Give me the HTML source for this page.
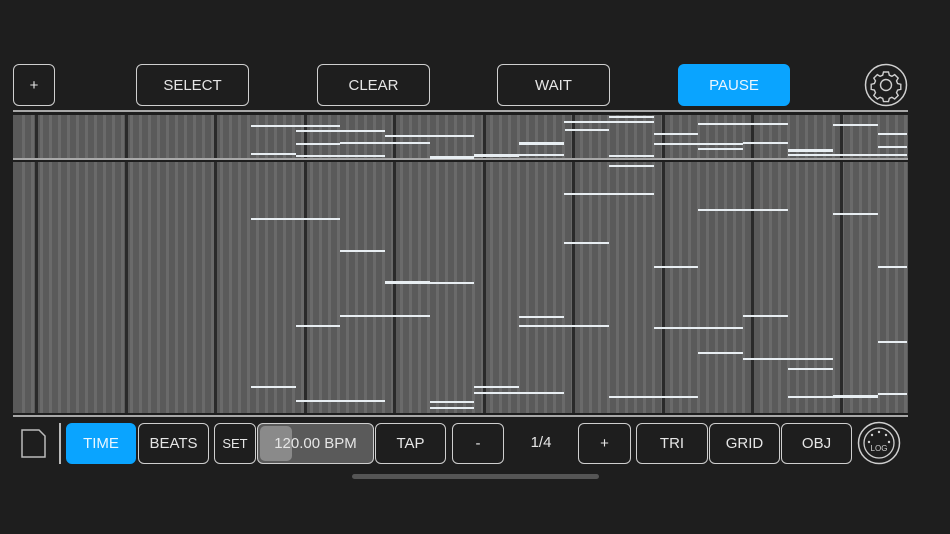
<!DOCTYPE html>
<html><head><style>
body{margin:0;background:#1e1e1e;width:950px;height:534px;overflow:hidden;position:relative;font-family:"Liberation Sans",sans-serif;}
.b{position:absolute;box-sizing:border-box;border:1.5px solid #cfcfcf;border-radius:6px;color:#e6e6e6;display:flex;align-items:center;justify-content:center;font-size:15px;letter-spacing:0}
.blue{background:#0aa4ff;border-color:#0aa4ff;color:#eaf6ff}
.hl{position:absolute;left:13px;width:895px;height:2px;background:#a8a8a8}
.g{position:absolute;left:13px;width:895px;background-color:#5a5a5a;background-image:repeating-linear-gradient(90deg,#5a5a5a 0 5px,#6a6a6a 5px 8px,#5a5a5a 8px 9px);background-position:4px 0}
.d{position:absolute;width:3px;background:#2a2a2a}
.n{position:absolute;height:2px;background:#e8eef2}
</style></head><body>
<div class="b" style="left:13px;top:64px;width:42px;height:42px">+</div>
<div class="b" style="left:136px;top:64px;width:113px;height:42px">SELECT</div>
<div class="b" style="left:317px;top:64px;width:113px;height:42px">CLEAR</div>
<div class="b" style="left:497px;top:64px;width:113px;height:42px">WAIT</div>
<div class="b blue" style="left:678px;top:64px;width:112px;height:42px">PAUSE</div>
<svg style="position:absolute;left:864px;top:63px" width="44" height="44" viewBox="0 0 44 44"><circle cx="22" cy="22" r="20.5" fill="none" stroke="#cfcfcf" stroke-width="1.5"/>
<g fill="none" stroke="#cfcfcf" stroke-width="1.4"><path d="M19.5 9h5l.8 3.2 2.6 1.1 2.8-1.7 3.5 3.5-1.7 2.8 1.1 2.6 3.2.8v5l-3.2.8-1.1 2.6 1.7 2.8-3.5 3.5-2.8-1.7-2.6 1.1-.8 3.2h-5l-.8-3.2-2.6-1.1-2.8 1.7-3.5-3.5 1.7-2.8-1.1-2.6-3.2-.8v-5l3.2-.8 1.1-2.6-1.7-2.8 3.5-3.5 2.8 1.7 2.6-1.1z"/><circle cx="22" cy="22" r="5.5"/></g></svg>
<div class="hl" style="top:110px"></div>
<div class="g" style="top:115px;height:43px"></div>
<div class="hl" style="top:158px"></div>
<div class="g" style="top:162px;height:251px"></div>
<div class="hl" style="top:415px"></div>
<div id="grid"></div>
<svg style="position:absolute;left:20px;top:429px" width="28" height="30"><path d="M2 1h17l6 6v21H2z" fill="none" stroke="#bbb" stroke-width="1.5"/></svg>
<div style="position:absolute;left:59px;top:423px;width:2px;height:41px;background:#bbb"></div>
<div class="b blue" style="left:66px;top:423px;width:70px;height:41px">TIME</div>
<div class="b" style="left:138px;top:423px;width:71px;height:41px">BEATS</div>
<div class="b" style="left:214px;top:423px;width:42px;height:41px;font-size:13px">SET</div>
<div class="b" style="left:257px;top:423px;width:117px;height:41px;background:#5a5a5a"><div style="position:absolute;left:2px;top:2px;width:32px;height:35px;background:#8a8a8a;border-radius:5px"></div><span style="position:relative">120.00 BPM</span></div>
<div class="b" style="left:375px;top:423px;width:71px;height:41px">TAP</div>
<div class="b" style="left:452px;top:423px;width:52px;height:41px">-</div>
<div style="position:absolute;left:520px;top:434px;width:42px;text-align:center;color:#e6e6e6;font-size:15px">1/4</div>
<div class="b" style="left:578px;top:423px;width:53px;height:41px">+</div>
<div class="b" style="left:636px;top:423px;width:72px;height:41px">TRI</div>
<div class="b" style="left:709px;top:423px;width:71px;height:41px">GRID</div>
<div class="b" style="left:781px;top:423px;width:71px;height:41px">OBJ</div>
<svg style="position:absolute;left:857px;top:421px" width="44" height="44"><circle cx="22" cy="22" r="20.5" fill="none" stroke="#cfcfcf" stroke-width="1.5"/><circle cx="22" cy="22" r="15" fill="none" stroke="#cfcfcf" stroke-width="1.3"/><g fill="#cfcfcf"><circle cx="22" cy="11" r="1.2"/><circle cx="15" cy="14" r="1.2"/><circle cx="29" cy="14" r="1.2"/><circle cx="12" cy="21" r="1.2"/><circle cx="32" cy="21" r="1.2"/></g><text x="22" y="30" font-size="8" fill="#cfcfcf" text-anchor="middle" font-family="Liberation Sans">LOG</text></svg>
<div style="position:absolute;left:352px;top:474px;width:247px;height:5px;border-radius:3px;background:#555"></div>
<script>
var g=document.getElementById('grid'),h='';
[36,126,215,305,394,484,573,663,752,841].forEach(function(x){h+='<div class="d" style="left:'+(x-1)+'px;top:115px;height:43px"></div><div class="d" style="left:'+(x-1)+'px;top:162px;height:251px"></div>';});
var N=[[251,340,125],[296,385,130],[385,474,135],[340,430,142],[296,340,143],[251,296,153],[296,385,155],[430,474,156,3],[474,519,154,3],[519,564,142,3],[519,564,154],[564,654,121],[609,654,116],[565,609,129],[609,654,155],[654,698,133],[698,788,123],[654,743,143],[698,743,148],[743,788,142],[788,833,149,3],[788,878,154],[833,878,124],[878,907,133],[878,907,146],[878,907,154],
[251,340,218],[340,385,250],[385,430,281,3],[430,474,282],[296,340,325],[340,430,315],[251,296,386],[296,385,400],[430,474,401],[430,474,407],[474,519,386],[474,519,392],[474,564,392],[519,564,316],[519,609,325],[564,609,242],[564,654,193],[609,654,165],[609,698,396],[654,698,266],[654,743,327],[698,788,209],[698,743,352],[743,788,315],[743,833,358],[788,833,368],[788,833,396],[833,878,213],[833,878,395,3],[878,907,266],[878,907,341],[878,907,393]];
N.forEach(function(n){h+='<div class="n" style="left:'+n[0]+'px;width:'+(n[1]-n[0])+'px;top:'+n[2]+'px;height:'+(n[3]||2)+'px"></div>';});
g.innerHTML=h;
</script>
</body></html>
